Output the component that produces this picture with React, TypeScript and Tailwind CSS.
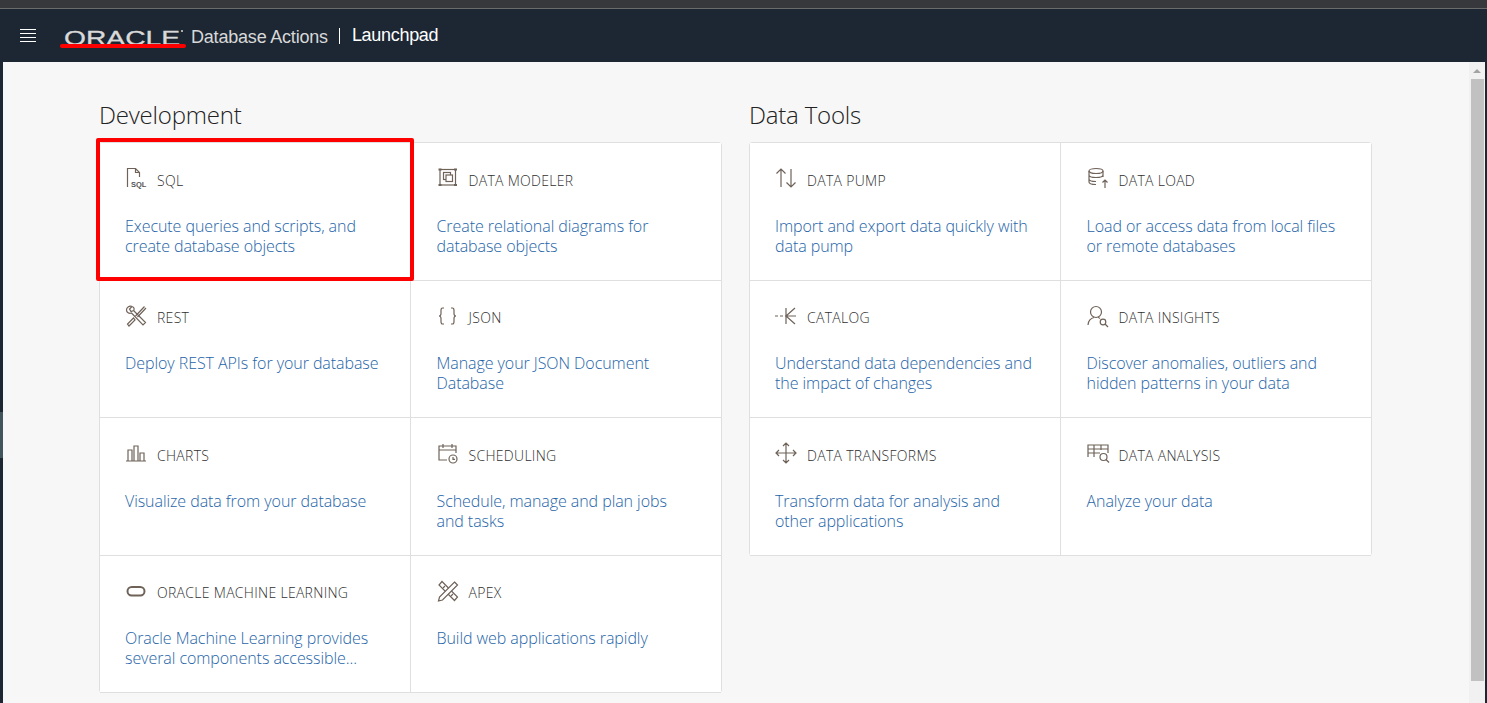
const sans = 'font-["Open_Sans","Noto_Sans",sans-serif]';

function Icon({ children }: { children: React.ReactNode }) {
  return (
    <svg viewBox="0 0 24 24" fill="none" stroke="#6f6259" strokeWidth="1.2" className="w-6 h-6 shrink-0 -ml-px -translate-y-0.5">
      {children}
    </svg>
  );
}

const icons: Record<string, React.ReactNode> = {
  sql: (
    <>
      <path d="M3.500 21V2.500h8l4 4V11M11.500 2.500v4h4" />
      <text x="7" y="20.500" fontSize="7.500" fontWeight="700" fill="#555" stroke="none" fontFamily="Liberation Sans, sans-serif">SQL</text>
    </>
  ),
  modeler: (
    <>
      <rect x="4" y="3.500" width="15.500" height="15.500" />
      <rect x="7.500" y="6.500" width="7" height="7" />
      <rect x="10" y="9" width="6.500" height="6.500" fill="#fff" />
      <path d="M2.500 3.500h3M2.500 19h3M18 3.500h3M18 19h3" strokeWidth="1.800" />
    </>
  ),
  rest: (
    <>
      <path d="M8 2.500L5.500 5 7 7.500l2.800-1C10.500 4.500 10 3 8 2.500zM8 2.500C5 1.500 2.500 3.500 2.500 6c0 2.500 2.500 4 5 3L19 21l2.500-2.500L10 7" />
      <path d="M20.500 2.500L11.500 12M22 4l-8.500 9" />
      <path d="M9.500 14l-6 6L5 22l6-6z" />
    </>
  ),
  json: (
    <path d="M8 4H6.500C5 4 5 5 5 6.500v3C5 11 4 12 3 12c1 0 2 1 2 2.500v3C5 19 5 20 6.500 20H8M15 4h1.500C18 4 18 5 18 6.500v3c0 1.500 1 2.500 2 2.500-1 0-2 1-2 2.500v3c0 1.500 0 2.500-1.500 2.500H15" />
  ),
  charts: <path d="M2 20h20M4 20V9h4v11M10 20V5h4v15M16 20v-8h4v8" />,
  scheduling: (
    <>
      <path d="M11 19H3V5h17v7M3 9h17M7 3v4M16 3v4" />
      <circle cx="17" cy="18" r="4" />
      <path d="M17 16v2.300h2" />
    </>
  ),
  ml: <rect x="3.500" y="8" width="17" height="8.500" rx="4.200" strokeWidth="2" />,
  apex: (
    <>
      <path d="M6 2.500L21.500 18l-3 3.500L3 6z" />
      <path d="M18.500 3l3 3L6.500 21 2.500 22l1-4z" fill="#fff" />
      <path d="M7 9l2-2M15 17l2-2" />
    </>
  ),
  pump: <path d="M7 21V3M2.500 7.500L7 3l4.500 4.500M17 3v18M12.500 16.500L17 21l4.500-4.500" />,
  catalog: <path d="M1 12h3M6 12h3M11 12h11M12 4v16M21 4l-9 8 9 8" />,
  load: (
    <>
      <ellipse cx="10" cy="5" rx="7" ry="2.500" />
      <path d="M3 5v11c0 1.400 3 2.500 7 2.500M17 5v6M3 9c0 1.400 3 2.500 7 2.500s7-1.100 7-2.500M3 13c0 1.400 3 2.500 7 2.500" />
      <path d="M19 22v-8M16.500 16.500L19 14l2.500 2.500" />
    </>
  ),
  insights: (
    <>
      <circle cx="10" cy="8" r="5.500" />
      <path d="M2 21c0-4 3-7 6-7.500M12 13.500c1 .2 1.500.5 2 1" />
      <circle cx="17" cy="18" r="2.800" />
      <path d="M19 20l3 3" />
    </>
  ),
  transforms: (
    <path d="M12 2v20M2 12h20M9 5l3-3 3 3M9 19l3 3 3-3M5 9l-3 3 3 3M19 9l3 3-3 3" />
  ),
  analysis: (
    <>
      <path d="M2 16V4h20v8M2 8h20M2 12h12M8 4v12M15 4v5" />
      <circle cx="17.500" cy="16" r="3.500" />
      <path d="M20 18.500l3 3" />
    </>
  ),
};

type Tool = { icon: string; title: string; desc: string };

const development: Tool[] = [
  { icon: "sql", title: "SQL", desc: "Execute queries and scripts, and create database objects" },
  { icon: "modeler", title: "DATA MODELER", desc: "Create relational diagrams for database objects" },
  { icon: "rest", title: "REST", desc: "Deploy REST APIs for your database" },
  { icon: "json", title: "JSON", desc: "Manage your JSON Document Database" },
  { icon: "charts", title: "CHARTS", desc: "Visualize data from your database" },
  { icon: "scheduling", title: "SCHEDULING", desc: "Schedule, manage and plan jobs and tasks" },
  { icon: "ml", title: "ORACLE MACHINE LEARNING", desc: "Oracle Machine Learning provides several components accessible..." },
  { icon: "apex", title: "APEX", desc: "Build web applications rapidly" },
];

const dataTools: Tool[] = [
  { icon: "pump", title: "DATA PUMP", desc: "Import and export data quickly with data pump" },
  { icon: "load", title: "DATA LOAD", desc: "Load or access data from local files or remote databases" },
  { icon: "catalog", title: "CATALOG", desc: "Understand data dependencies and the impact of changes" },
  { icon: "insights", title: "DATA INSIGHTS", desc: "Discover anomalies, outliers and hidden patterns in your data" },
  { icon: "transforms", title: "DATA TRANSFORMS", desc: "Transform data for analysis and other applications" },
  { icon: "analysis", title: "DATA ANALYSIS", desc: "Analyze your data" },
];

function Card({ tool, index }: { tool: Tool; index: number }) {
  return (
    <div className={`h-[137.5px] pt-[23px] bg-white border-b border-[#dfdfdf] ${index % 2 === 0 ? "pl-[25px] pr-[26px] border-r" : "pl-[26px] pr-[25px]"}`}>
      <div className="flex items-center gap-[9px] h-7">
        <Icon>{icons[tool.icon]}</Icon>
        <span className="text-[14px] tracking-[0.3px] font-light text-[#2f2f2f]">{tool.title}</span>
      </div>
      <p className="mt-[21.6px] text-[16px] leading-[20px] tracking-[-0.06px] font-light text-[#1e64a8]">{tool.desc}</p>
    </div>
  );
}

function Section({ title, tools }: { title: string; tools: Tool[] }) {
  return (
    <section className="w-[623px]">
      <h2 className="text-[24px] leading-[32px] tracking-[-0.2px] font-light text-[#222] mb-[11px]">{title}</h2>
      <div className="grid grid-cols-2 border-t border-l border-r border-[#dfdfdf] rounded-sm">
        {tools.map((tool, i) => (
          <Card key={tool.title} tool={tool} index={i} />
        ))}
      </div>
    </section>
  );
}

export default function App() {
  return (
    <div className={`relative h-[703px] w-[1487px] overflow-hidden flex flex-col bg-[#1c2733] ${sans}`}>
      <div className="h-2 bg-[#37383b]" />
      <div className="h-px bg-[#6b6b6b]" />

      <header className="h-[53px] shrink-0 flex items-center bg-[#1c2733] font-['Liberation_Sans',sans-serif] text-[18px]">
        <div className="ml-5 w-4 flex flex-col gap-[3px]">
          <span className="h-px bg-white" />
          <span className="h-px bg-white" />
          <span className="h-px bg-white" />
          <span className="h-px bg-white" />
        </div>
        <div className="ml-[27px] w-[124px] h-6 shrink-0">
          <svg viewBox="0 0 124 24" className="w-[124px] h-6">
            <text x="1" y="20.500" fontSize="21" textLength="116" lengthAdjust="spacingAndGlyphs" fill="#d9d9d9" stroke="#d9d9d9" strokeWidth="0.3" fontFamily="Liberation Sans, sans-serif">ORACLE</text>
            <circle cx="119" cy="7" r="1" fill="#d9d9d9" />
          </svg>
        </div>
        <span className="ml-[4px] mt-[3px] tracking-[-0.2px] text-[#d8d8d8]">Database Actions</span>
        <span className="ml-[11px] mt-[1px] w-px h-4 bg-white" />
        <span className="ml-3 tracking-[-0.3px] text-white">Launchpad</span>
      </header>

      <div className="flex-1 flex min-h-0">
        <div className="w-[3px] shrink-0 flex flex-col">
          <div className="h-[350px] bg-[#1c2733]" />
          <div className="h-[46px] bg-[#41565a]" />
          <div className="flex-1 bg-[#1c2733]" />
        </div>
        <main className="flex-1 min-w-0 bg-[#f7f7f7] pl-[96px] pt-[37px] flex gap-[27px] overflow-hidden items-start">
          <Section title="Development" tools={development} />
          <Section title="Data Tools" tools={dataTools} />
        </main>
        <div className="w-4 shrink-0 bg-[#f1f1f1] flex flex-col items-center pt-[7px]">
          <span className="w-0 h-0 border-x-[4px] border-x-transparent border-b-[4px] border-b-[#a3a3a3]" />
          <span className="mt-[6px] w-[13px] h-[602px] bg-[#c1c1c1]" />
        </div>
        <div className="w-0.5 shrink-0 bg-[#1c2733]" />
      </div>

      {/* red annotations drawn over the screenshot */}
      <div className="absolute left-[96px] top-[138px] w-[318px] h-[143px] border-4 border-[#ff0000] rounded-[2px]" />
      <div className="absolute left-[60px] top-[44px] w-[126px] h-[4px] bg-[#ff0000] rounded-full" />
    </div>
  );
}
